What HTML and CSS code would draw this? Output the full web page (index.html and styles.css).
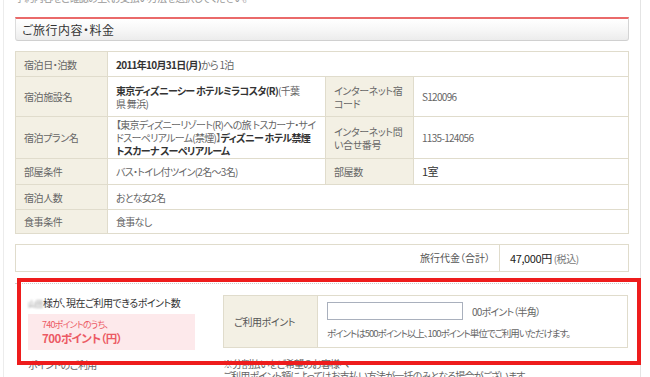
FILE: index.html
```html
<!DOCTYPE html>
<html lang="ja">
<head>
<meta charset="utf-8">
<title>ご旅行内容・料金</title>
<link rel="stylesheet" href="styles.css">
</head>
<body>
<div class="page">
  <p class="lead">予約内容をご確認の上、お支払い方法を選択してください。</p>

  <section class="sect">
    <h2 class="sect-head">ご旅行内容・料金</h2>

    <table class="detail">
      <colgroup>
        <col class="c-lab"><col class="c-val"><col class="c-lab2"><col class="c-val2">
      </colgroup>
      <tr class="r1">
        <th>宿泊日・泊数</th>
        <td colspan="3"><b>2011年10月31日(月)</b>から 1泊</td>
      </tr>
      <tr class="r2">
        <th>宿泊施設名</th>
        <td class="wrap"><b>東京ディズニーシー ホテルミラコスタ(R)</b>(千葉県&nbsp;舞浜)</td>
        <th class="wrap">インターネット宿コード</th>
        <td>S120096</td>
      </tr>
      <tr class="r3">
        <th>宿泊プラン名</th>
        <td class="wrap">【東京ディズニーリゾート(R)への旅 トスカーナ・サイドスーペリアルーム(禁煙)】<b>ディズニー ホテル禁煙トスカーナ スーペリアルーム</b></td>
        <th class="wrap">インターネット問い合せ番号</th>
        <td>1135-124056</td>
      </tr>
      <tr class="r4">
        <th>部屋条件</th>
        <td>バス・トイレ付ツイン(2名～3名)</td>
        <th>部屋数</th>
        <td class="dark">1室</td>
      </tr>
      <tr class="r5">
        <th>宿泊人数</th>
        <td colspan="3">おとな女2名</td>
      </tr>
      <tr class="r6">
        <th>食事条件</th>
        <td colspan="3">食事なし</td>
      </tr>
    </table>

    <div class="total">
      <div class="total-lab">旅行代金（合計）</div>
      <div class="total-val"><b>47,000円</b> <span class="tax">(税込)</span></div>
    </div>

    <div class="points">
      <div class="pts-left">
        <p class="pts-head"><span class="masked">山田</span>様が、現在ご利用できるポイント数</p>
        <div class="pts-box">
          <p class="pts-small">740ポイントのうち、</p>
          <p class="pts-big">700ポイント（円）</p>
        </div>
      </div>
      <div class="pts-right">
        <div class="use-lab">ご利用ポイント</div>
        <div class="use-val">
          <div class="use-row">
            <input class="use-input" type="text" value="">
            <span class="unit">00ポイント（半角）</span>
          </div>
          <p class="use-note">ポイントは500ポイント以上、100ポイント単位でご利用いただけます。</p>
        </div>
      </div>
    </div>

    <div class="after">
      <p class="after-left">ポイントのご利用</p>
      <div class="after-right">
        <p>※分割払いをご希望のお客様へ</p>
        <p>ご利用ポイント額によってはお支払い方法が一括のみとなる場合がございます。</p>
      </div>
    </div>
  </section>
</div>
<div class="highlight"></div>
</body>
</html>
```

FILE: styles.css
```css
* { box-sizing: border-box; }
html, body { margin: 0; padding: 0; background: #fff; }
body {
  font-family: "Noto Sans CJK JP", "Noto Sans", sans-serif;
  font-size: 10px;
  color: #555;
  font-feature-settings: "palt";
  overflow: hidden;
  width: 650px;
  height: 377px;
  position: relative;
}
p { margin: 0; }
b { font-weight: bold; color: #333; }

.page {
  margin: 0 9px 0 3px;
  width: 638px;
  border-left: 1px solid #ececec;
  border-right: 1px solid #e4e4e4;
  padding: 0 11px;
  min-height: 377px;
}
.lead {
  margin-top: -9px;
  line-height: 14px;
  color: #999;
  white-space: nowrap;
  letter-spacing: -0.6px;
}
.sect { margin-top: 12px; }
.sect-head {
  margin: 0;
  height: 24px;
  border-top: 2px solid #ea6a6a;
  border-left: 1px solid #dcdcdc;
  border-right: 1px solid #d4d4d4;
  border-bottom: 1px solid #d0d0d0;
  border-radius: 0 0 3px 3px;
  background: linear-gradient(#ffffff, #f6f6f6 55%, #ececec);
  font-size: 12px;
  font-weight: normal;
  color: #333;
  line-height: 21px;
  padding-left: 6px;
  letter-spacing: 0.5px;
}

.detail {
  margin-top: 10px;
  width: 613px;
  table-layout: fixed;
  border-collapse: collapse;
}
.c-lab { width: 92px; }
.c-val { width: 218px; }
.c-lab2 { width: 88px; }
.c-val2 { width: 215px; }
.detail th, .detail td {
  border: 1px solid #e0dccc;
  text-align: left;
  vertical-align: middle;
  padding: 0 8px;
  line-height: 13px;
  white-space: nowrap;
  overflow: hidden;
}
.detail .wrap {
  white-space: normal;
  word-break: break-all;
}
.detail th {
  background: #f3f0e4;
  font-weight: normal;
  color: #666;
  letter-spacing: -0.4px;
}
.detail td { color: #666; letter-spacing: -0.7px; }
.detail td.dark { color: #333; font-size: 11px; }
.r1 { height: 25px; }
.r2 { height: 40px; }
.r3 { height: 42px; }
.r4 { height: 26px; }
.r5 { height: 25px; }
.r6 { height: 24px; }

.total {
  margin-top: 10px;
  height: 28px;
  display: flex;
  border: 1px solid #e0dccc;
}
.total-lab {
  flex: 1;
  text-align: right;
  padding-right: 9px;
  line-height: 26px;
  color: #555;
}
.total-val {
  width: 129px;
  border-left: 1px solid #e0dccc;
  padding-left: 10px;
  line-height: 26px;
  color: #333;
  letter-spacing: -0.4px;
}
.total-val b { font-size: 11px; font-weight: normal; color: #222; }
.tax { color: #777; }

.points {
  margin-top: 11px;
  border-top: 1px dotted #ccc;
  padding: 11px 0 0 13px;
  display: flex;
  gap: 28px;
}
.pts-left { width: 167px; }
.pts-head {
  line-height: 14px;
  color: #333;
  margin-top: 1px;
  white-space: nowrap;
  letter-spacing: -0.5px;
}
.masked { color: #8a8a8a; filter: blur(0.9px); font-size: 7.5px; letter-spacing: 0; }
.pts-box {
  margin-top: 3px;
  height: 36px;
  background: #fde9eb;
  padding: 5px 0 0 14px;
  color: #ec5a64;
}
.pts-small { font-size: 9px; line-height: 12px; letter-spacing: -0.8px; }
.pts-big { font-size: 11.5px; line-height: 15px; font-weight: bold; letter-spacing: -0.5px; }

.pts-right {
  width: 405px;
  height: 53px;
  display: flex;
  border: 1px solid #e0dccc;
}
.use-lab {
  width: 94px;
  background: #f3f0e4;
  border-right: 1px solid #e0dccc;
  padding-left: 10px;
  line-height: 51px;
  color: #555;
  letter-spacing: -0.4px;
}
.use-val { flex: 1; padding: 6px 0 0 9px; }
.use-row { display: flex; align-items: center; gap: 9px; }
.use-input {
  width: 136px;
  height: 18px;
  border: 1px solid #a9b0bd;
  margin: 0;
  padding: 0;
  background: #fff;
}
.unit { color: #666; letter-spacing: -0.8px; }
.use-note {
  margin-top: 7px;
  color: #666;
  line-height: 13px;
  white-space: nowrap;
  font-size: 9.5px;
  letter-spacing: -1px;
}

.after {
  margin-top: 8px;
  padding-left: 13px;
  display: flex;
}
.after-left { width: 195px; color: #666; line-height: 13px; letter-spacing: -0.6px; }
.after-right { color: #666; line-height: 12px; white-space: nowrap; letter-spacing: -0.8px; }

.highlight {
  position: absolute;
  left: 17px;
  top: 278px;
  width: 624px;
  height: 87px;
  border: 4px solid #ee1c1c;
  pointer-events: none;
}
```
